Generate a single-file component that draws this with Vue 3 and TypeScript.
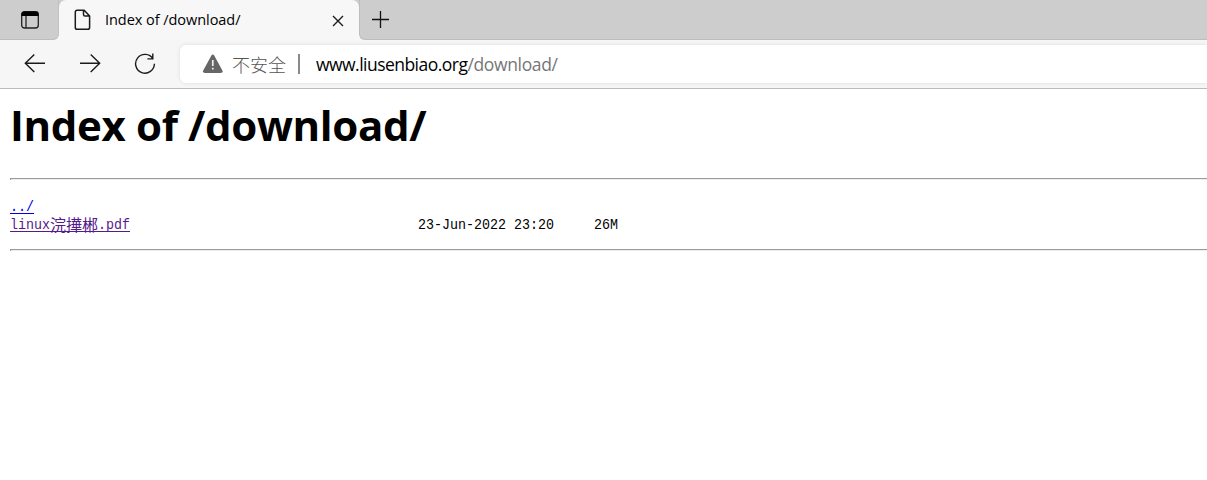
<script setup lang="ts">
interface Entry {
  name: string
  cjk: string
  ext: string
  date: string
  size: string
}

const path = '/download/'
const host = 'www.liusenbiao.org'
const entries: Entry[] = [
  { name: 'linux', cjk: '浣撶郴', ext: '.pdf', date: '23-Jun-2022 23:20', size: '26M' },
]
</script>

<template>
  <div class="browser">
    <header class="tabstrip">
      <div class="side left">
        <svg class="panel" width="20" height="20" viewBox="0 0 20 20">
          <rect x="1.7" y="1.7" width="16.6" height="16.3" rx="2.8" fill="none" stroke="#222" stroke-width="1.3" />
          <path d="M1.5 6V4Q1.5 1.5 4 1.5H16Q18.5 1.5 18.5 4V6Z" fill="#000" />
          <path d="M6 6V18" stroke="#222" stroke-width="1.3" />
        </svg>
      </div>
      <div class="tab">
        <svg class="doc" width="18" height="22" viewBox="0 0 18 22">
          <path d="M3.2 1.3H10.2L15.6 7.1V18.4Q15.6 20.3 13.7 20.3H3.2Q1.3 20.3 1.3 18.4V3.2Q1.3 1.3 3.2 1.3Z M9.5 1.5V5.5Q9.5 7.1 11 7.1H15.6" fill="none" stroke="#1b1b1b" stroke-width="1.5" stroke-linejoin="round" />
        </svg>
        <span class="tab-title">Index of {{ path }}</span>
        <svg class="close" width="12" height="12" viewBox="0 0 12 12">
          <path d="M1 1L11 11M11 1L1 11" stroke="#1b1b1b" stroke-width="1.4" />
        </svg>
      </div>
      <div class="side right">
        <svg class="plus" width="18" height="18" viewBox="0 0 18 18">
          <path d="M8.5 0V17M0 8.5H17" stroke="#111" stroke-width="1.3" />
        </svg>
      </div>
    </header>

    <nav class="toolbar">
      <svg class="nav-icon" width="22" height="20" viewBox="0 0 22 20">
        <path d="M10.3 1.5L1.3 10.3L10.3 19.1M1.3 10.3H21" fill="none" stroke="#1b1b1b" stroke-width="1.4" />
      </svg>
      <svg class="nav-icon" width="22" height="20" viewBox="0 0 22 20">
        <path d="M11.7 1.5L20.7 10.3L11.7 19.1M20.7 10.3H1" fill="none" stroke="#1b1b1b" stroke-width="1.4" />
      </svg>
      <svg class="nav-icon reload" width="22" height="22" viewBox="0 0 22 22">
        <path d="M19 5.8A9.4 9.4 0 1 0 20.4 10.8M18.8 .6V5.9H13.4" fill="none" stroke="#1b1b1b" stroke-width="1.4" />
      </svg>
      <div class="address">
        <svg class="warn" width="22" height="20" viewBox="0 0 22 20">
          <path d="M9.4 1.5Q10.8 -.4 12.2 1.5L20.4 16.5Q21.3 19 18.7 19H2.9Q.3 19 1.2 16.5Z" fill="#666" />
          <path d="M10.8 6V12M10.8 13.7V15.6" stroke="#eee" stroke-width="1.7" />
        </svg>
        <span class="insecure">不安全</span>
        <span class="divider"></span>
        <span class="url">{{ host }}<span class="path">{{ path }}</span></span>
      </div>
    </nav>

    <main class="page">
      <h1>Index of {{ path }}</h1>
      <hr />
      <div class="listing">
        <div class="row"><a class="parent"><span class="mono">../</span></a></div>
        <div v-for="entry in entries" :key="entry.name" class="row">
          <a class="file"><span class="mono name">{{ entry.name }}</span><span class="cjk">{{ entry.cjk }}</span><span class="mono">{{ entry.ext }}</span></a>
          <span class="mono">{{ entry.date }}</span>
          <span class="mono">{{ entry.size }}</span>
        </div>
      </div>
      <hr />
    </main>
  </div>
</template>

<style>
body {
  margin: 0;
  background: #fff;
}
</style>

<style scoped>
.browser {
  width: 100%;
  height: 480px;
  overflow: hidden;
  background: #fff;
  font-family: "Open Sans", "Noto Sans", "Noto Sans CJK SC", sans-serif;
  color: #000;
}
svg {
  display: block;
  flex: none;
}
.tabstrip {
  display: flex;
  height: 40px;
  background: #f7f7f7;
}
.side {
  background: #cdcdcd;
  box-sizing: border-box;
  border-bottom: 1px solid #bdbdbd;
}
.left {
  width: 59px;
  border-right: 1px solid #c2c2c2;
  border-bottom-right-radius: 6px;
  padding: 10px 0 0 20px;
}
.right {
  flex: 1;
  border-left: 1px solid #bdbdbd;
  border-bottom-left-radius: 6px;
  padding: 11px 0 0 12px;
}
.tab {
  display: flex;
  align-items: center;
  box-sizing: border-box;
  width: 300px;
  padding: 0 15px;
  background: #f7f7f7;
  border-radius: 7px 7px 0 0;
  box-shadow: 0 -8px 0 #cdcdcd;
}
.tab-title {
  margin-left: 13px;
  font-size: 14.5px;
  line-height: 20px;
  letter-spacing: -0.05px;
  white-space: nowrap;
}
.close {
  margin: 1px 0 0 auto;
}
.toolbar {
  display: flex;
  box-sizing: border-box;
  height: 49px;
  padding: 4px 0 0 24px;
  border-bottom: 1px solid #bbb;
  background: #f6f6f6;
}
.nav-icon {
  margin: 9px 33px 0 0;
}
.reload {
  margin-right: 24px;
}
.address {
  display: flex;
  align-items: center;
  flex: 1;
  height: 38px;
  margin-top: 1px;
  box-sizing: border-box;
  padding: 0 0 1px 22px;
  border-radius: 6px 0 0 6px;
  background: #fff;
  box-shadow: 0 0 4px rgba(0, 0, 0, 0.1);
}
.insecure {
  margin-left: 8px;
  font: 300 18px/24px "Noto Sans CJK SC", sans-serif;
  color: #555;
}
.divider {
  width: 2px;
  height: 20px;
  margin: 1px 16px 0 12px;
  background: #8a8a8a;
}
.url {
  font-size: 17.5px;
  line-height: 24px;
  letter-spacing: -0.53px;
  white-space: nowrap;
}
.path {
  letter-spacing: -0.35px;
  color: #767676;
}
.page {
  padding-left: 10px;
}
h1 {
  margin: 0;
  height: 89px;
  padding-top: 6px;
  box-sizing: border-box;
  font-size: 42px;
  line-height: 60px;
  font-weight: 700;
  letter-spacing: -0.35px;
  white-space: nowrap;
}
hr {
  margin: 0;
  border: 0;
  height: 1px;
  border-top: 1px solid #9a9a9a;
  border-left: 1px solid #9a9a9a;
  background: #eee;
}
.listing {
  height: 69px;
  padding-top: 18px;
  box-sizing: border-box;
}
.row {
  display: grid;
  grid-template-columns: 408px 176px auto;
  height: 18px;
  line-height: 18px;
  white-space: nowrap;
}
.row a {
  display: flex;
  width: 120px;
  height: 15px;
  border-bottom: 1px solid;
}
.row .parent {
  width: 24px;
  color: #00e;
}
.file {
  color: #551a8b;
}
/* Condensed half-width cells, 8px per glyph. */
.mono {
  font: 15px/20px "Liberation Mono", monospace;
  transform: scaleX(0.8888);
  transform-origin: 0 0;
}
.name {
  width: 40px;
}
.cjk {
  width: 48px;
  font: 400 16px/16px "Noto Sans CJK SC", sans-serif;
}
</style>
